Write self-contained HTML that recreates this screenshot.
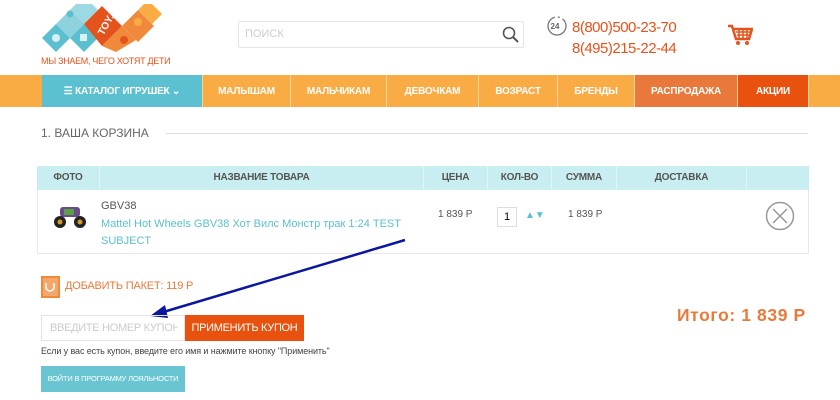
<!DOCTYPE html>
<html><head><meta charset="utf-8"><style>
*{margin:0;padding:0;box-sizing:border-box}
body{width:840px;height:400px;background:#fff;font-family:"Liberation Sans",sans-serif;position:relative;overflow:hidden}
.a{position:absolute;white-space:nowrap}
.nav{top:75px;left:0;width:840px;height:32px;background:#f9ab44}
.nav div{position:absolute;top:0;height:32px;color:#fff;font-size:10px;font-weight:bold;display:flex;align-items:center;justify-content:center;border-left:1px solid #fcd39b;letter-spacing:-.2px}
.hd{top:166px;left:37px;width:772px;height:24px;background:#c9eef2}
.hd div{position:absolute;top:0;height:24px;line-height:24px;text-align:center;font-size:10px;font-weight:bold;color:#555;border-right:1px solid #e0f5f7;letter-spacing:-.2px}
</style></head><body>
<!-- logo -->
<svg class="a" style="left:40px;top:4px" width="125" height="50" viewBox="0 0 125 50">
<polygon points="2,34 16,20 30,34 16,48" fill="#5bbfcf"/>
<polygon points="16,20 30,6 44,20 30,34" fill="#8dd2dd"/>
<polygon points="30,34 44,20 58,34 44,48" fill="#5bbfcf"/>
<polygon points="30,6 44,-8 58,6 44,20" fill="#5bbfcf" opacity=".6"/>
<polygon points="44,20 62,2 82,22 62,42" fill="#e4531c"/>
<polygon points="62,42 82,22 96,36 76,48" fill="#f08a3a"/>
<polygon points="82,22 98,6 114,22 98,38" fill="#f08a3a"/>
<polygon points="98,6 108,-4 122,10 112,20" fill="#f9ab44"/>
<circle cx="16" cy="34" r="4" fill="#d6f0f4"/><circle cx="30" cy="10" r="3.5" fill="#5bbfcf"/>
<rect x="40" y="30" width="7" height="7" fill="#d6f0f4"/>
<circle cx="98" cy="18" r="4" fill="#f9ab44"/><circle cx="84" cy="36" r="4" fill="#e4531c"/>
<text x="54" y="28" transform="rotate(-60 62 22)" font-size="10" font-weight="bold" fill="#fff" font-family="Liberation Sans">TOY.RU</text>
</svg>
<div class="a" style="left:41px;top:56px;font-size:9px;color:#e4531c;letter-spacing:-.3px">МЫ ЗНАЕМ, ЧЕГО ХОТЯТ ДЕТИ</div>
<!-- search -->
<div class="a" style="left:238px;top:21px;width:286px;height:27px;border:1px solid #e4e4e4;border-radius:2px"></div>
<div class="a" style="left:245px;top:28px;font-size:11px;color:#ccc">ПОИСК</div>
<svg class="a" style="left:502px;top:26px" width="18" height="18" viewBox="0 0 18 18"><circle cx="7" cy="7" r="5.5" fill="none" stroke="#555" stroke-width="1.6"/><line x1="11" y1="11" x2="16" y2="16" stroke="#555" stroke-width="2"/></svg>
<svg class="a" style="left:546px;top:15px" width="22" height="22" viewBox="0 0 22 22"><circle cx="11" cy="11" r="9" fill="none" stroke="#777" stroke-width="1.3" stroke-dasharray="40 3 2 3"/><text x="4.5" y="14" font-size="8" font-weight="bold" fill="#666" font-family="Liberation Sans">24</text></svg>
<div class="a" style="left:572px;top:17px;font-size:15px;color:#e4531c;line-height:21px;letter-spacing:-.5px">8(800)500-23-70<br>8(495)215-22-44</div>
<svg class="a" style="left:727px;top:24px" width="26" height="22" viewBox="0 0 26 22"><path d="M1 2h4l4 13h13l3-10H7" fill="none" stroke="#e4531c" stroke-width="2.5"/><path d="M9 8h14M10 11h12M12 5v10M16 5v10M20 5v10" stroke="#e4531c" stroke-width="1.5"/><circle cx="11" cy="19" r="2" fill="#e4531c"/><circle cx="20" cy="19" r="2" fill="#e4531c"/></svg>
<!-- nav -->
<div class="a nav">
<div style="left:42px;width:160px;background:#5bc0cf;border:none">☰ КАТАЛОГ ИГРУШЕК ⌄</div>
<div style="left:202px;width:88px">МАЛЫШАМ</div>
<div style="left:290px;width:96px">МАЛЬЧИКАМ</div>
<div style="left:386px;width:92px">ДЕВОЧКАМ</div>
<div style="left:478px;width:79px">ВОЗРАСТ</div>
<div style="left:557px;width:77px">БРЕНДЫ</div>
<div style="left:634px;width:103px;background:#e8793a">РАСПРОДАЖА</div>
<div style="left:737px;width:71px;background:#e8520e">АКЦИИ</div>
<div style="left:808px;width:32px"></div>
</div>
<div class="a" style="left:41px;top:126px;font-size:12px;color:#666">1. ВАША КОРЗИНА</div>
<div class="a" style="left:166px;top:133px;width:642px;height:1px;background:#ddd"></div>
<!-- table -->
<div class="a" style="left:37px;top:166px;width:772px;height:88px;border:1px solid #e8e8e8"></div>
<div class="a hd">
<div style="left:0;width:63px">ФОТО</div>
<div style="left:63px;width:324px">НАЗВАНИЕ ТОВАРА</div>
<div style="left:387px;width:64px">ЦЕНА</div>
<div style="left:451px;width:64px">КОЛ-ВО</div>
<div style="left:515px;width:65px">СУММА</div>
<div style="left:580px;width:130px">ДОСТАВКА</div>
</div>
<svg class="a" style="left:52px;top:204px" width="36" height="26" viewBox="0 0 36 26"><rect x="8" y="3" width="20" height="10" rx="3" fill="#6a4a8a"/><rect x="12" y="5" width="10" height="6" fill="#5aa040"/><circle cx="8" cy="18" r="6" fill="#222"/><circle cx="28" cy="18" r="6" fill="#222"/><circle cx="8" cy="18" r="2.5" fill="#d9952a"/><circle cx="28" cy="18" r="2.5" fill="#d9952a"/></svg>
<div class="a" style="left:101px;top:200px;font-size:11px;color:#555">GBV38</div>
<div class="a" style="left:101px;top:216px;font-size:11px;color:#5bc0cf;line-height:17px;width:300px;white-space:normal">Mattel Hot Wheels GBV38 Хот Вилс Монстр трак 1:24 TEST SUBJECT</div>
<div class="a" style="left:438px;top:209px;font-size:10px;color:#555">1 839 Р</div>
<div class="a" style="left:497px;top:207px;width:20px;height:20px;border:1px solid #ddd;font-size:11px;line-height:19px;padding-left:6px">1</div>
<div class="a" style="left:525px;top:210px;font-size:10px;color:#5bc0cf">▲▼</div>
<div class="a" style="left:568px;top:209px;font-size:10px;color:#555">1 839 Р</div>
<svg class="a" style="left:765px;top:201px" width="30" height="30" viewBox="0 0 30 30"><circle cx="15" cy="15" r="13.5" fill="none" stroke="#999" stroke-width="1.5"/><path d="M8 8L22 22M22 8L8 22" stroke="#999" stroke-width="1.5"/></svg>
<!-- package -->
<svg class="a" style="left:41px;top:276px" width="19" height="22" viewBox="0 0 19 22"><rect width="19" height="22" fill="#f08a3a"/><rect x="2" y="2" width="15" height="18" fill="#fff" opacity=".25"/><path d="M5 7v4a4 4 0 0 0 8 0V7" fill="none" stroke="#fff" stroke-width="1.5"/></svg>
<div class="a" style="left:65px;top:280px;font-size:11px;color:#e87a3a;letter-spacing:-.2px">ДОБАВИТЬ ПАКЕТ: 119 Р</div>
<!-- arrow -->
<svg class="a" style="left:0;top:0" width="840" height="400"><line x1="405" y1="240" x2="160" y2="313" stroke="#0a17a0" stroke-width="2.5"/><polygon points="150,316 165,305 168,318" fill="#0a17a0"/></svg>
<!-- coupon -->
<div class="a" style="left:41px;top:315px;width:144px;height:26px;border:1px solid #e4e4e4"></div>
<div class="a" style="left:50px;top:322px;font-size:11px;color:#ccc;width:128px;overflow:hidden;letter-spacing:-.3px">ВВЕДИТЕ НОМЕР КУПОНА</div>
<div class="a" style="left:185px;top:315px;width:119px;height:26px;background:#e8520e;color:#fff;font-size:11px;line-height:26px;text-align:center;letter-spacing:-.3px">ПРИМЕНИТЬ КУПОН</div>
<div class="a" style="left:41px;top:346px;font-size:9px;color:#444;letter-spacing:-.1px">Если у вас есть купон, введите его имя и нажмите кнопку "Применить"</div>
<div class="a" style="left:41px;top:366px;width:144px;height:26px;background:#6ac5d3;color:#fff;font-size:7.5px;line-height:26px;text-align:center;letter-spacing:-.2px">ВОЙТИ В ПРОГРАММУ ЛОЯЛЬНОСТИ</div>
<div class="a" style="left:677px;top:305px;font-size:17.5px;font-weight:bold;color:#e87a3a;letter-spacing:.6px">Итого: 1 839 Р</div>
</body></html>
